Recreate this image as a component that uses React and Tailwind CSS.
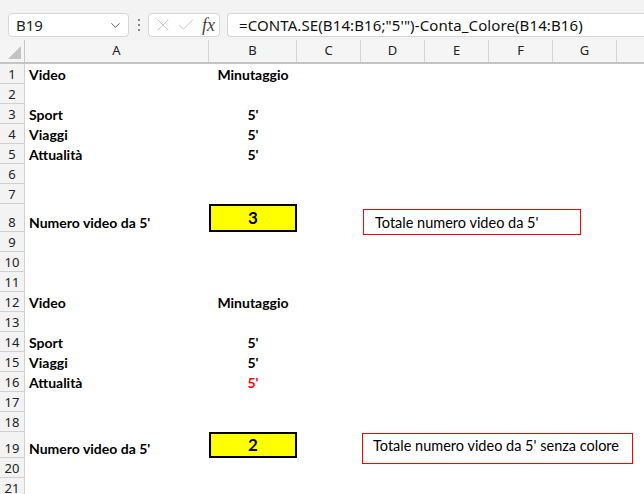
import { ChevronDown, X, Check } from 'lucide-react';

const COLS = [
  { id: 'A', w: 'w-[184px]' },
  { id: 'B', w: 'w-[88px]' },
  { id: 'C', w: 'w-[64px]' },
  { id: 'D', w: 'w-[64px]' },
  { id: 'E', w: 'w-[64px]' },
  { id: 'F', w: 'w-[64px]' },
  { id: 'G', w: 'w-[64px]' },
];

// row number -> { h, a, b, red, box }
const ROWS = {
  1: { a: 'Video', b: 'Minutaggio' },
  3: { a: 'Sport', b: "5'" },
  4: { a: 'Viaggi', b: "5'" },
  5: { a: 'Attualità', b: "5'" },
  8: { h: 'h-[28px]', a: "Numero video da 5'", box: '3' },
  12: { a: 'Video', b: 'Minutaggio' },
  14: { a: 'Sport', b: "5'" },
  15: { a: 'Viaggi', b: "5'" },
  16: { a: 'Attualità', b: "5'", red: true },
  19: { h: 'h-[26px]', a: "Numero video da 5'", box: '2' },
};

function Toolbar() {
  return (
    <div className="h-[40px] bg-[#f3f3f3] flex items-start pt-[13px] pl-[8px] gap-[7px] font-['Noto_Sans',sans-serif]">
      <div className="w-[121px] h-[24px] bg-white border border-[#d6d6d6] rounded-[4px] flex items-center justify-between pl-[7px] pr-[5px] text-[15px] text-[#222]">
        <span>B19</span>
        <ChevronDown size={15} strokeWidth={1.5} className="text-[#555]" />
      </div>
      <div className="w-[5px] h-[24px] flex flex-col items-center justify-center gap-[3px]">
        <span className="w-[2px] h-[2px] bg-[#888]" />
        <span className="w-[2px] h-[2px] bg-[#888]" />
        <span className="w-[2px] h-[2px] bg-[#888]" />
      </div>
      <div className="w-[72px] h-[24px] bg-white border border-[#d6d6d6] rounded-[4px] flex items-center pl-[4px] gap-[1px]">
        <X size={20} strokeWidth={1} className="text-[#bbb]" />
        <Check size={20} strokeWidth={1} className="ml-[2px] text-[#bbb]" />
        <span className="ml-[5px] font-['Liberation_Serif',serif] italic text-[18px] text-[#444] leading-none">fx</span>
      </div>
      <div className="flex-1 h-[24px] bg-white border border-[#d6d6d6] border-r-0 rounded-l-[4px] flex items-center pl-[11px] text-[15px] tracking-[0.1px] text-[#111] whitespace-nowrap">
        =CONTA.SE(B14:B16;"5'")-Conta_Colore(B14:B16)
      </div>
    </div>
  );
}

function HeaderRow() {
  return (
    <div className="flex h-[24px] bg-[#f5f5f5] border-b-2 border-[#c5c5c5] font-['Noto_Sans',sans-serif] text-[13px] text-[#222]">
      <div className="w-[25px] shrink-0 border-r border-[#c8c8c8] relative">
        <svg className="absolute right-[3px] bottom-[3px]" width="13" height="13" viewBox="0 0 13 13">
          <polygon points="13,0 13,13 0,13" fill="#c3c3c3" />
        </svg>
      </div>
      {COLS.map((c) => (
        <div key={c.id} className={`${c.w} shrink-0 border-r border-[#d4d4d4] flex items-center justify-center`}>
          {c.id}
        </div>
      ))}
      <div className="flex-1" />
    </div>
  );
}

function Row({ n }) {
  const r = ROWS[n] || {};
  return (
    <div className={`flex ${r.h || 'h-[20px]'}`}>
      <div className="w-[25px] shrink-0 bg-[#f3f3f3] border-r border-b border-[#d0d0d0] flex items-end justify-center font-['Noto_Sans',sans-serif] text-[13px] text-[#222] leading-[18px]">
        {n}
      </div>
      <div className="w-[184px] shrink-0 flex items-end pl-[4px] font-['Lato',sans-serif] font-bold text-[14px] text-black leading-[18px]">
        {r.a}
      </div>
      <div className="w-[88px] shrink-0 flex items-end justify-center font-['Lato',sans-serif] font-bold text-[14px] leading-[18px]">
        {r.box ? (
          <div className="w-full h-full bg-[#ffff00] border-2 border-black flex items-center justify-center text-[17px] text-black">
            {r.box}
          </div>
        ) : (
          <span className={r.red ? 'text-[#ff0000]' : 'text-black'}>{r.b}</span>
        )}
      </div>
      <div className="flex-1" />
    </div>
  );
}

export default function App() {
  const nums = Array.from({ length: 21 }, (_, i) => i + 1);
  return (
    <div className="w-[644px] h-[494px] overflow-hidden bg-white relative">
      <Toolbar />
      <HeaderRow />
      {nums.map((n) => (
        <Row key={n} n={n} />
      ))}
      <div className="absolute left-[363px] top-[209px] w-[218px] h-[26px] border border-[#ff0000] bg-white pl-[11px] pt-[2px] font-['Lato',sans-serif] text-[14.5px] text-black">
        Totale numero video da 5'
      </div>
      <div className="absolute left-[362px] top-[433px] w-[271px] h-[31px] border border-[#ff0000] bg-white pl-[10px] pt-[1px] font-['Lato',sans-serif] text-[14.5px] text-black">
        Totale numero video da 5' senza colore
      </div>
    </div>
  );
}
